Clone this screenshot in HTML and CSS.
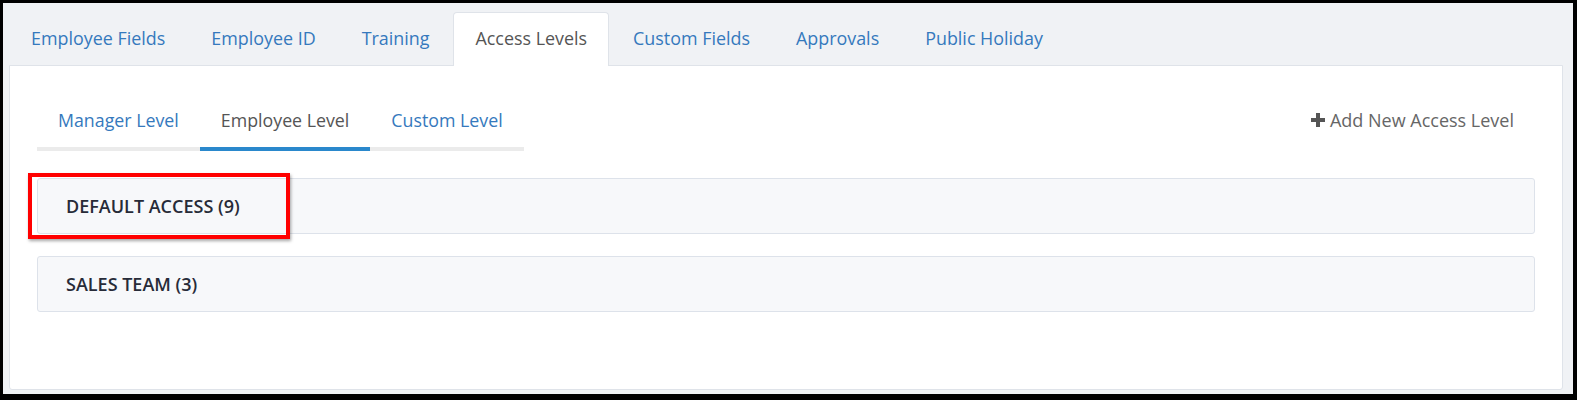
FILE: index.html
```html
<!DOCTYPE html>
<html>
<head>
<meta charset="utf-8">
<link rel="stylesheet" href="styles.css">
</head>
<body>
<div class="frame">
  <ul class="tabs">
    <li class="tab">Employee Fields</li>
    <li class="tab">Employee ID</li>
    <li class="tab">Training</li>
    <li class="tab active">Access Levels</li>
    <li class="tab">Custom Fields</li>
    <li class="tab">Approvals</li>
    <li class="tab">Public Holiday</li>
  </ul>
  <div class="panel">
    <div class="subbar">
      <ul class="subtabs">
        <li class="subtab">Manager Level</li>
        <li class="subtab active">Employee Level</li>
        <li class="subtab">Custom Level</li>
      </ul>
      <a class="addlink"><svg class="plus" width="14" height="14" viewBox="0 0 14 14"><path d="M5 0h4v5h5v4H9v5H5V9H0V5h5z" fill="#555"/></svg>Add New Access Level</a>
    </div>
    <div class="groups">
      <div class="group">
        <span class="group-title">DEFAULT ACCESS (9)</span>
        <div class="highlight"></div>
      </div>
      <div class="group">
        <span class="group-title">SALES TEAM (3)</span>
      </div>
    </div>
  </div>
</div>
</body>
</html>
```

FILE: styles.css
```css
* { box-sizing: border-box; }
html, body { margin: 0; padding: 0; }
body {
  background: #000;
  font-family: "Open Sans", "Liberation Sans", sans-serif;
}
.frame {
  margin: 3px 4px 6px 3px;
  height: 391px;
  background: #f0f2f5;
  padding: 9px 10px 4px 6px;
  display: flex;
  flex-direction: column;
}
.tabs {
  list-style: none;
  margin: 0;
  padding: 0;
  display: flex;
  height: 53px;
  position: relative;
  z-index: 1;
}
.tab {
  padding: 0 21px;
  margin-right: 2px;
  border: 1px solid transparent;
  border-bottom: none;
  border-radius: 4px 4px 0 0;
  font-size: 17.9px;
  line-height: 50px;
  color: #3579bd;
  white-space: nowrap;
}
.tab.active {
  background: #fff;
  border-color: #dfe3e9;
  color: #555;
  height: 54px;
}
.panel {
  flex: 1;
  background: #fff;
  border: 1px solid #dfe3e9;
  border-radius: 0 0 3px 3px;
  padding: 34px 27px 0 27px;
}
.subbar {
  display: flex;
  justify-content: space-between;
  align-items: flex-start;
}
.subtabs {
  list-style: none;
  margin: 0;
  padding: 0;
  display: flex;
}
.subtab {
  padding: 8px 21px 15px;
  line-height: 24px;
  font-size: 17.8px;
  color: #3579bd;
  border-bottom: 4px solid #ebebeb;
  white-space: nowrap;
}
.subtab.active {
  color: #555;
  border-bottom-color: #2a88cc;
}
.addlink {
  display: flex;
  align-items: center;
  gap: 5px;
  padding: 8px 21px 0;
  line-height: 24px;
  font-size: 18px;
  color: #666;
}
.groups {
  margin-top: 27px;
  display: flex;
  flex-direction: column;
  gap: 22px;
}
.group {
  position: relative;
  height: 56px;
  background: #f7f8fa;
  border: 1px solid #dde2ea;
  border-radius: 3px;
  padding: 0 28px;
  display: flex;
  align-items: center;
}
.group-title {
  font-weight: 600;
  font-size: 18px;
  color: #272b38;
}
.highlight {
  position: absolute;
  left: -10px;
  top: -6px;
  width: 262px;
  height: 66px;
  border: 4px solid #f00;
  box-shadow: 1px 2px 3px rgba(0,0,0,0.35);
  pointer-events: none;
}
```
